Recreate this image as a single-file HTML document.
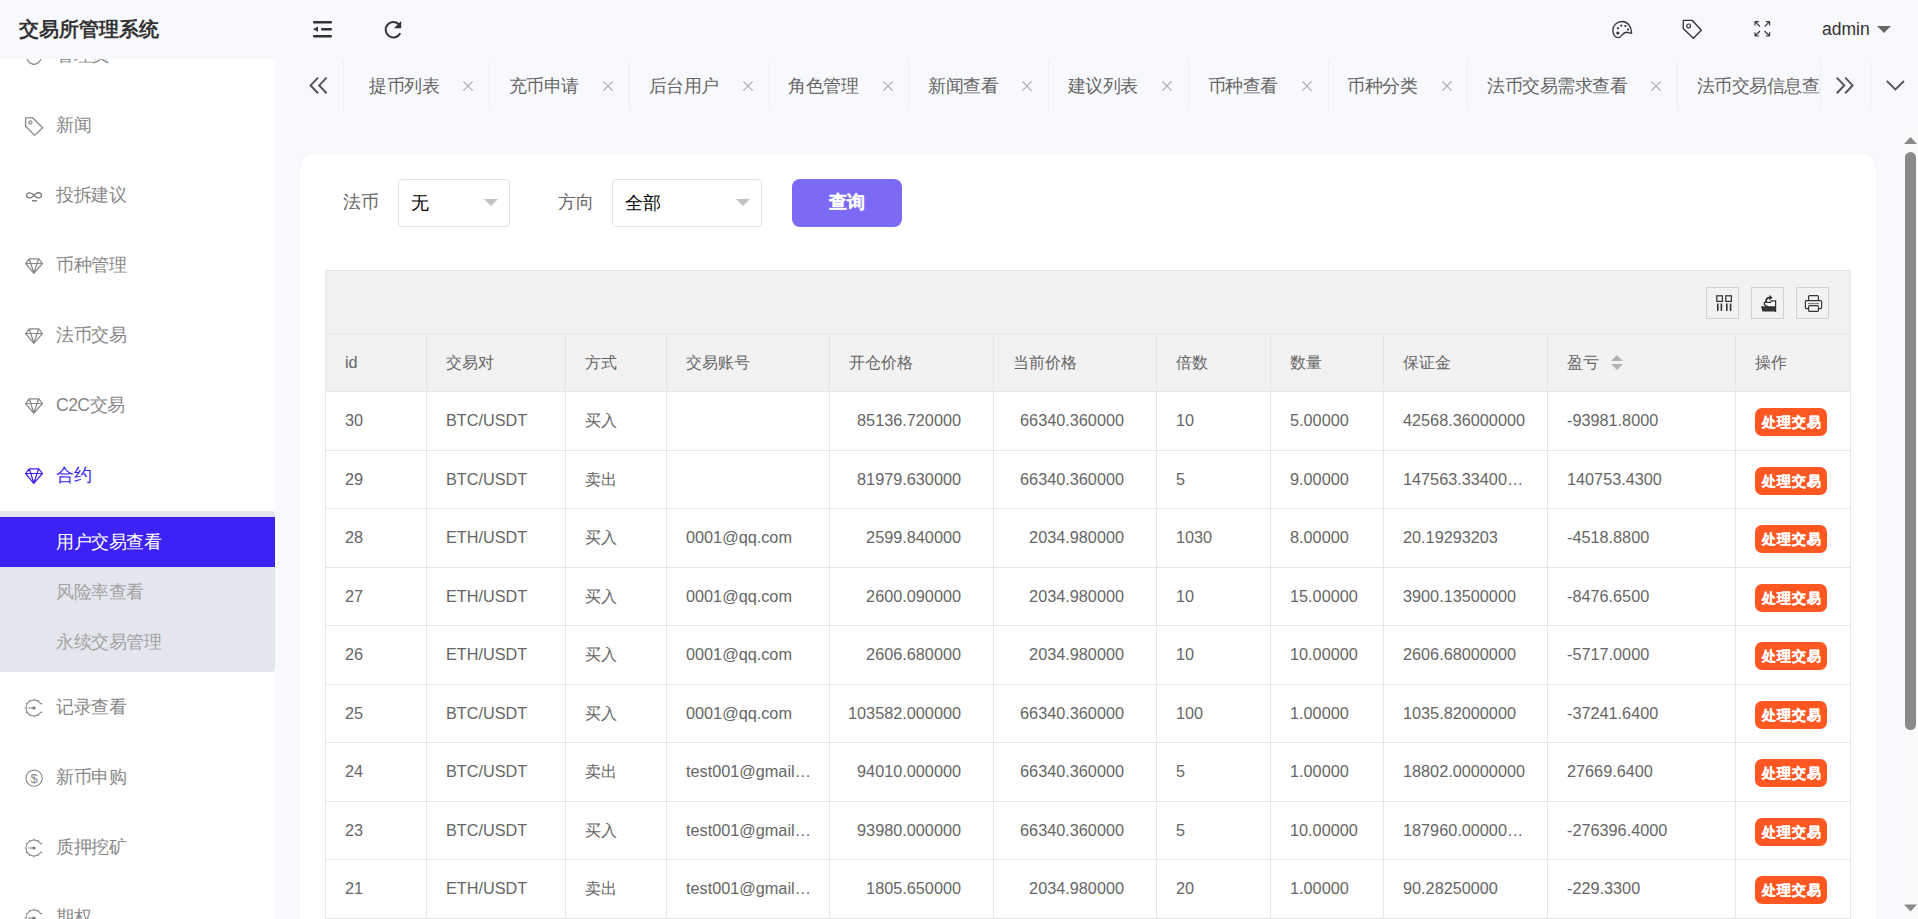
<!DOCTYPE html>
<html><head><meta charset="utf-8">
<style>
*{margin:0;padding:0;box-sizing:border-box}
html,body{width:1918px;height:919px;overflow:hidden;background:#f8f9fd;font-family:"Liberation Sans",sans-serif;color:#666}
.abs{position:absolute}
#header{position:absolute;left:0;top:0;width:1918px;height:59px;background:#f8f9fd;z-index:5}
#logo{position:absolute;left:19px;top:14px;font-size:20px;font-weight:bold;color:#333;line-height:30px;white-space:nowrap}
#side{position:absolute;left:0;top:0;width:275px;height:919px;background:#fff;overflow:hidden;z-index:1}
.mi{position:absolute;left:0;width:275px;height:70px;font-size:17.5px;letter-spacing:-0.5px;color:#888;line-height:70px;white-space:nowrap}
.mi span{position:absolute;left:56px;top:0}
.mi svg{position:absolute;left:25px;top:26px}
#sub{position:absolute;left:0;top:511px;width:275px;height:161px;background:#e4e6ee;border-radius:0 3px 3px 0}
.si{position:absolute;left:0;width:275px;height:50px;line-height:50px;font-size:17.5px;letter-spacing:-0.5px;color:#a3a3a3;white-space:nowrap}
.si span{position:absolute;left:56px}
.tabsep{position:absolute;top:61px;width:1px;height:49px;background:#eceef2}
.tab{position:absolute;top:59px;height:54px;line-height:54px;font-size:17.5px;letter-spacing:-0.5px;color:#666;white-space:nowrap}
.tx{position:absolute;top:0;font-size:18px;color:#c2c2c2}
#card{position:absolute;left:300px;top:154px;width:1576px;height:800px;background:#fff;border-radius:15px;box-shadow:0 0 1.5px rgba(0,0,20,0.07)}
.lbl{position:absolute;font-size:17.5px;letter-spacing:-0.5px;color:#666;line-height:24px;white-space:nowrap}
.sel{position:absolute;top:179px;height:48px;border:1px solid #e2e2e2;border-radius:4px;background:#fff}
.sel span{position:absolute;left:12px;top:11px;font-size:17.5px;color:#000;line-height:24px}
.caret{position:absolute;width:0;height:0;border-left:7px solid transparent;border-right:7px solid transparent;border-top:7px solid #c2c2c2}
#btn{position:absolute;left:792px;top:179px;width:110px;height:48px;background:#7a6af4;border-radius:8px;color:#fff;font-size:17.5px;font-weight:bold;-webkit-text-stroke:0.3px #fff;text-align:center;line-height:46px}
.hl{position:absolute;height:1px;background:#e6e6e6}
.vl{position:absolute;width:1px;background:#e6e6e6}
.c{position:absolute;font-size:16.25px;color:#666;white-space:nowrap;line-height:20px}
.badge{position:absolute;left:1755px;width:72px;height:28px;border-radius:7px;background:#ff5722;color:#fff;font-weight:bold;font-size:14px;letter-spacing:1px;text-indent:1px;-webkit-text-stroke:0.3px #fff;line-height:28px;text-align:center;white-space:nowrap}
.tbtn{position:absolute;top:287px;width:32px;height:32px;border:1px solid #d2d2d2;background:#f2f2f2}
</style></head><body>
<div id="side">

  <svg class="abs" style="left:22px;top:48px" width="24" height="20" viewBox="22 48 24 20"><path d="M27 58 Q27.5 63 34 64.5 Q40.5 63 41 58" fill="none" stroke="#888" stroke-width="1.3"/></svg>
  <svg class="abs" style="left:22px;top:113px" width="24" height="26" viewBox="22 113 24 26"><path d="M25.6 117.8 L32.6 117.8 L42.6 127.8 L34.6 135.4 L25.6 126.2 Z" fill="none" stroke="#888" stroke-width="1.3" stroke-linejoin="round"/><circle cx="30.4" cy="122.4" r="1.6" fill="none" stroke="#888" stroke-width="1.2"/></svg>
  <svg class="abs" style="left:22px;top:185px" width="24" height="20" viewBox="22 185 24 20"><path d="M34 195.3 C31.5 192.2 26.6 191.8 26.6 195.4 C26.6 199 31.5 198.6 34 195.3 C36.5 192 41.4 191.8 41.4 195.4 C41.4 199 36.5 198.6 34 195.3" fill="none" stroke="#777" stroke-width="1.3"/><rect x="32" y="200" width="5" height="1.6" fill="#888"/></svg>
<svg class="abs" style="left:22px;top:253px" width="24" height="24" viewBox="22 253 24 24"><path d="M29.2 258.8 L38.8 258.8 L42.4 263.5 L33.8 273.4 L25.6 263.5 Z M25.8 263.5 L42.2 263.5 M29.4 259 L33.8 273 L38.6 259" fill="none" stroke="#888" stroke-width="1.2" stroke-linejoin="round"/></svg>
<svg class="abs" style="left:22px;top:323px" width="24" height="24" viewBox="22 323 24 24"><path d="M29.2 328.8 L38.8 328.8 L42.4 333.5 L33.8 343.4 L25.6 333.5 Z M25.8 333.5 L42.2 333.5 M29.4 329 L33.8 343 L38.6 329" fill="none" stroke="#888" stroke-width="1.2" stroke-linejoin="round"/></svg>
<svg class="abs" style="left:22px;top:393px" width="24" height="24" viewBox="22 393 24 24"><path d="M29.2 398.8 L38.8 398.8 L42.4 403.5 L33.8 413.4 L25.6 403.5 Z M25.8 403.5 L42.2 403.5 M29.4 399 L33.8 413 L38.6 399" fill="none" stroke="#888" stroke-width="1.2" stroke-linejoin="round"/></svg>
<svg class="abs" style="left:22px;top:463px" width="24" height="24" viewBox="22 463 24 24"><path d="M29.2 468.8 L38.8 468.8 L42.4 473.5 L33.8 483.4 L25.6 473.5 Z M25.8 473.5 L42.2 473.5 M29.4 469 L33.8 483 L38.6 469" fill="none" stroke="#3d22f5" stroke-width="1.2" stroke-linejoin="round"/></svg>
<svg class="abs" style="left:22px;top:696px" width="24" height="24" viewBox="22 696 24 24"><path d="M40.78 703.76 A8.0 8.0 0 1 0 40.78 712.24 M40.67 704.15 L42.05 703.35 M37.85 701.33 L38.65 699.95 M34.00 700.30 L34.00 698.70 M30.15 701.33 L29.35 699.95 M27.33 704.15 L25.95 703.35 M26.30 708.00 L24.70 708.00 M27.33 711.85 L25.95 712.65 M30.15 714.67 L29.35 716.05 M34.00 715.70 L34.00 717.30 M37.85 714.67 L38.65 716.05 M40.67 711.85 L42.05 712.65" fill="none" stroke="#888" stroke-width="1.1"/><line x1="28.4" y1="708" x2="34" y2="708" stroke="#888" stroke-width="1.1"/><circle cx="34" cy="708" r="1.6" fill="#777"/></svg>
<svg class="abs" style="left:22px;top:766px" width="24" height="24" viewBox="22 766 24 24"><circle cx="34.1" cy="778.2" r="8.1" fill="none" stroke="#888" stroke-width="1.1"/><text x="34.1" y="783.4" font-size="13" text-anchor="middle" fill="#888" font-family="Liberation Sans">$</text></svg>
<svg class="abs" style="left:22px;top:836px" width="24" height="24" viewBox="22 836 24 24"><path d="M40.78 843.76 A8.0 8.0 0 1 0 40.78 852.24 M40.67 844.15 L42.05 843.35 M37.85 841.33 L38.65 839.95 M34.00 840.30 L34.00 838.70 M30.15 841.33 L29.35 839.95 M27.33 844.15 L25.95 843.35 M26.30 848.00 L24.70 848.00 M27.33 851.85 L25.95 852.65 M30.15 854.67 L29.35 856.05 M34.00 855.70 L34.00 857.30 M37.85 854.67 L38.65 856.05 M40.67 851.85 L42.05 852.65" fill="none" stroke="#888" stroke-width="1.1"/><line x1="28.4" y1="848" x2="34" y2="848" stroke="#888" stroke-width="1.1"/><circle cx="34" cy="848" r="1.6" fill="#777"/></svg>
<svg class="abs" style="left:22px;top:906px" width="24" height="24" viewBox="22 906 24 24"><path d="M40.78 913.76 A8.0 8.0 0 1 0 40.78 922.24 M40.67 914.15 L42.05 913.35 M37.85 911.33 L38.65 909.95 M34.00 910.30 L34.00 908.70 M30.15 911.33 L29.35 909.95 M27.33 914.15 L25.95 913.35 M26.30 918.00 L24.70 918.00 M27.33 921.85 L25.95 922.65 M30.15 924.67 L29.35 926.05 M34.00 925.70 L34.00 927.30 M37.85 924.67 L38.65 926.05 M40.67 921.85 L42.05 922.65" fill="none" stroke="#888" stroke-width="1.1"/><line x1="28.4" y1="918" x2="34" y2="918" stroke="#888" stroke-width="1.1"/><circle cx="34" cy="918" r="1.6" fill="#777"/></svg>
  <div class="mi" style="top:20px"><span>管理员</span></div>
  <div class="mi" style="top:90px"><span>新闻</span></div>
  <div class="mi" style="top:160px"><span>投拆建议</span></div>
  <div class="mi" style="top:230px"><span>币种管理</span></div>
  <div class="mi" style="top:300px"><span>法币交易</span></div>
  <div class="mi" style="top:370px"><span>C2C交易</span></div>
  <div class="mi" style="top:440px;color:#3d22f5"><span>合约</span></div>
  <div id="sub">
    <div class="si" style="top:6px;background:#3d22f5;color:#fff"><span>用户交易查看</span></div>
    <div class="si" style="top:56px"><span>风险率查看</span></div>
    <div class="si" style="top:106px"><span>永续交易管理</span></div>
  </div>
  <div class="mi" style="top:672px"><span>记录查看</span></div>
  <div class="mi" style="top:742px"><span>新币申购</span></div>
  <div class="mi" style="top:812px"><span>质押挖矿</span></div>
  <div class="mi" style="top:882px"><span>期权</span></div>
</div>
<div id="header">
  <div id="logo">交易所管理系统</div>
  <div class="abs" style="left:1822px;top:16px;font-size:17.5px;color:#333;line-height:26px">admin</div>
  <div class="caret" style="left:1877px;top:26px;border-left-width:7px;border-right-width:7px;border-top:7px solid #666"></div>
</div>

<!-- header icons -->
<svg class="abs" style="left:310px;top:18px;z-index:6" width="26" height="24" viewBox="310 18 26 24">
  <rect x="313" y="21" width="19" height="2.4" rx="1" fill="#333"/>
  <rect x="321" y="28" width="11" height="2.4" rx="1" fill="#333"/>
  <rect x="313" y="35" width="19" height="2.4" rx="1" fill="#333"/>
  <path d="M313 29.2 L318 26.6 L318 31.8 Z" fill="#333"/>
</svg>
<svg class="abs" style="left:380px;top:17px;z-index:6" width="26" height="26" viewBox="380 17 26 26">
  <path d="M399.3 24.8 A7.7 7.7 0 1 0 400.2 33.2" fill="none" stroke="#333" stroke-width="2.05"/>
  <path d="M401.2 21 L401.2 28.2 L394 28.2 Z" fill="#333"/>
</svg>
<svg class="abs" style="left:1608px;top:16px;z-index:6" width="30" height="26" viewBox="1608 16 30 26">
  <path d="M1631.6 33.3 C1631.6 26.6 1627.6 21.5 1622.2 21.5 C1616.6 21.5 1612.9 25.6 1612.9 30.2 C1612.9 34.8 1615.2 37.6 1618.4 37.6 C1621.6 37.6 1622.4 32.3 1626.4 32.3 C1628.6 32.3 1630 33.3 1631.6 33.3 Z" fill="none" stroke="#333" stroke-width="1.4" stroke-linejoin="round"/>
  <circle cx="1617.8" cy="33" r="1.6" fill="#333"/>
  <circle cx="1618" cy="28.2" r="1.1" fill="#333"/>
  <circle cx="1621.3" cy="25.7" r="1.1" fill="#333"/>
  <circle cx="1625.4" cy="26.1" r="1.1" fill="#333"/>
  <circle cx="1628" cy="29.5" r="1.1" fill="#333"/>
</svg>
<svg class="abs" style="left:1678px;top:16px;z-index:6" width="30" height="26" viewBox="1678 16 30 26">
  <path d="M1683.3 20.3 L1692.2 20.3 L1701.3 30.2 L1693.4 38.2 L1683.2 28.6 Z" fill="none" stroke="#333" stroke-width="1.35" stroke-linejoin="round"/>
  <circle cx="1688.6" cy="25.9" r="1.9" fill="none" stroke="#333" stroke-width="1.2"/>
</svg>
<svg class="abs" style="left:1750px;top:16px;z-index:6" width="26" height="26" viewBox="1750 16 26 26">
  <g stroke="#333" stroke-width="1.15" fill="none">
    <path d="M1755 21.6 L1760 26.6 M1755 21.6 L1755 25.4 M1755 21.6 L1758.8 21.6"/>
    <path d="M1769.6 21.6 L1764.6 26.6 M1769.6 21.6 L1769.6 25.4 M1769.6 21.6 L1765.8 21.6"/>
    <path d="M1755 36 L1760 31 M1755 36 L1755 32.2 M1755 36 L1758.8 36"/>
    <path d="M1769.6 36 L1764.6 31 M1769.6 36 L1769.6 32.2 M1769.6 36 L1765.8 36"/>
  </g>
</svg>
<!-- tab arrows -->
<svg class="abs" style="left:305px;top:72px" width="26" height="26" viewBox="305 72 26 26">
  <path d="M318 77.6 L310.6 85.4 L318 93.2 M326.6 77.6 L319.2 85.4 L326.6 93.2" fill="none" stroke="#555" stroke-width="2"/>
</svg>
<svg class="abs" style="left:1832px;top:72px" width="26" height="26" viewBox="1832 72 26 26">
  <path d="M1836.8 77.6 L1844.2 85.4 L1836.8 93.2 M1845.2 77.6 L1852.6 85.4 L1845.2 93.2" fill="none" stroke="#555" stroke-width="2"/>
</svg>
<svg class="abs" style="left:1882px;top:76px" width="26" height="18" viewBox="1882 76 26 18">
  <path d="M1886.8 81 L1895.4 89.4 L1904 81" fill="none" stroke="#555" stroke-width="1.8"/>
</svg>
<div class="tabsep" style="left:1820px"></div>
<div class="tabsep" style="left:1870px"></div>
<!-- scrollbar -->
<div class="abs" style="left:1901px;top:129px;width:17px;height:790px;background:#fafafa"></div>
<svg class="abs" style="left:1901px;top:129px" width="17" height="790" viewBox="0 0 17 790">
  <path d="M3 15 L9.5 8 L16 15 Z" fill="#8a8a8a"/>
  <rect x="4" y="23" width="11" height="578" rx="5.5" fill="#8a8a8a"/>
  <path d="M3 775.5 L9.5 782.5 L16 775.5 Z" fill="#8a8a8a"/>
</svg>

<!-- tabs -->
<div class="tabsep" style="left:343px"></div>
<div class="tab" style="left:369.00px">提币列表</div>
<svg class="abs" style="left:463px;top:81px" width="10" height="10"><path d="M0.3 0.3 L9.7 9.7 M9.7 0.3 L0.3 9.7" stroke="#aaa" stroke-width="1.1"/></svg>
<div class="tabsep" style="left:489px"></div>
<div class="tab" style="left:508.75px">充币申请</div>
<svg class="abs" style="left:603px;top:81px" width="10" height="10"><path d="M0.3 0.3 L9.7 9.7 M9.7 0.3 L0.3 9.7" stroke="#aaa" stroke-width="1.1"/></svg>
<div class="tabsep" style="left:629px"></div>
<div class="tab" style="left:648.50px">后台用户</div>
<svg class="abs" style="left:743px;top:81px" width="10" height="10"><path d="M0.3 0.3 L9.7 9.7 M9.7 0.3 L0.3 9.7" stroke="#aaa" stroke-width="1.1"/></svg>
<div class="tabsep" style="left:769px"></div>
<div class="tab" style="left:788.25px">角色管理</div>
<svg class="abs" style="left:883px;top:81px" width="10" height="10"><path d="M0.3 0.3 L9.7 9.7 M9.7 0.3 L0.3 9.7" stroke="#aaa" stroke-width="1.1"/></svg>
<div class="tabsep" style="left:908px"></div>
<div class="tab" style="left:928.00px">新闻查看</div>
<svg class="abs" style="left:1022px;top:81px" width="10" height="10"><path d="M0.3 0.3 L9.7 9.7 M9.7 0.3 L0.3 9.7" stroke="#aaa" stroke-width="1.1"/></svg>
<div class="tabsep" style="left:1048px"></div>
<div class="tab" style="left:1067.75px">建议列表</div>
<svg class="abs" style="left:1162px;top:81px" width="10" height="10"><path d="M0.3 0.3 L9.7 9.7 M9.7 0.3 L0.3 9.7" stroke="#aaa" stroke-width="1.1"/></svg>
<div class="tabsep" style="left:1188px"></div>
<div class="tab" style="left:1207.50px">币种查看</div>
<svg class="abs" style="left:1302px;top:81px" width="10" height="10"><path d="M0.3 0.3 L9.7 9.7 M9.7 0.3 L0.3 9.7" stroke="#aaa" stroke-width="1.1"/></svg>
<div class="tabsep" style="left:1328px"></div>
<div class="tab" style="left:1347.25px">币种分类</div>
<svg class="abs" style="left:1442px;top:81px" width="10" height="10"><path d="M0.3 0.3 L9.7 9.7 M9.7 0.3 L0.3 9.7" stroke="#aaa" stroke-width="1.1"/></svg>
<div class="tabsep" style="left:1467px"></div>
<div class="tab" style="left:1487.00px">法币交易需求查看</div>
<svg class="abs" style="left:1651px;top:81px" width="10" height="10"><path d="M0.3 0.3 L9.7 9.7 M9.7 0.3 L0.3 9.7" stroke="#aaa" stroke-width="1.1"/></svg>
<div class="tabsep" style="left:1677px"></div>
<div class="tab" style="left:1696.75px;width:123.25px;overflow:hidden">法币交易信息查看</div>
<div id="card"></div>
<div class="lbl" style="left:343px;top:190px">法币</div>
<div class="sel" style="left:398px;width:112px"><span>无</span><div class="caret" style="left:85px;top:19px"></div></div>
<div class="lbl" style="left:558px;top:190px">方向</div>
<div class="sel" style="left:612px;width:150px"><span>全部</span><div class="caret" style="left:123px;top:19px"></div></div>
<div id="btn">查询</div>
<div class="abs" style="left:325px;top:270px;width:1526px;height:122px;background:#f2f2f2"></div>
<div class="hl" style="left:325px;top:270px;width:1526px"></div>
<div class="hl" style="left:325px;top:333px;width:1526px"></div>
<div class="hl" style="left:325px;top:391px;width:1526px"></div>
<div class="hl" style="left:325px;top:450px;width:1526px"></div>
<div class="hl" style="left:325px;top:508px;width:1526px"></div>
<div class="hl" style="left:325px;top:567px;width:1526px"></div>
<div class="hl" style="left:325px;top:625px;width:1526px"></div>
<div class="hl" style="left:325px;top:684px;width:1526px"></div>
<div class="hl" style="left:325px;top:742px;width:1526px"></div>
<div class="hl" style="left:325px;top:801px;width:1526px"></div>
<div class="hl" style="left:325px;top:859px;width:1526px"></div>
<div class="hl" style="left:325px;top:918px;width:1526px"></div>
<div class="vl" style="left:325px;top:270px;height:649px"></div>
<div class="vl" style="left:1850px;top:270px;height:649px"></div>
<div class="vl" style="left:426px;top:333px;height:586px"></div>
<div class="vl" style="left:565px;top:333px;height:586px"></div>
<div class="vl" style="left:666px;top:333px;height:586px"></div>
<div class="vl" style="left:829px;top:333px;height:586px"></div>
<div class="vl" style="left:993px;top:333px;height:586px"></div>
<div class="vl" style="left:1156px;top:333px;height:586px"></div>
<div class="vl" style="left:1270px;top:333px;height:586px"></div>
<div class="vl" style="left:1383px;top:333px;height:586px"></div>
<div class="vl" style="left:1547px;top:333px;height:586px"></div>
<div class="vl" style="left:1735px;top:333px;height:586px"></div>
<div class="c" style="left:345px;top:352px">id</div>
<div class="c" style="left:446px;top:352px">交易对</div>
<div class="c" style="left:585px;top:352px">方式</div>
<div class="c" style="left:686px;top:352px">交易账号</div>
<div class="c" style="left:849px;top:352px">开仓价格</div>
<div class="c" style="left:1013px;top:352px">当前价格</div>
<div class="c" style="left:1176px;top:352px">倍数</div>
<div class="c" style="left:1290px;top:352px">数量</div>
<div class="c" style="left:1403px;top:352px">保证金</div>
<div class="c" style="left:1567px;top:352px">盈亏</div>
<div class="c" style="left:1755px;top:352px">操作</div>
<div class="c" style="left:345px;top:410px">30</div>
<div class="c" style="left:446px;top:410px">BTC/USDT</div>
<div class="c" style="left:585px;top:410px">买入</div>
<div class="c" style="right:957px;top:410px">85136.720000</div>
<div class="c" style="right:794px;top:410px">66340.360000</div>
<div class="c" style="left:1176px;top:410px">10</div>
<div class="c" style="left:1290px;top:410px">5.00000</div>
<div class="c" style="left:1403px;top:410px">42568.36000000</div>
<div class="c" style="left:1567px;top:410px">-93981.8000</div>
<div class="badge" style="top:408px">处理交易</div>
<div class="c" style="left:345px;top:469px">29</div>
<div class="c" style="left:446px;top:469px">BTC/USDT</div>
<div class="c" style="left:585px;top:469px">卖出</div>
<div class="c" style="right:957px;top:469px">81979.630000</div>
<div class="c" style="right:794px;top:469px">66340.360000</div>
<div class="c" style="left:1176px;top:469px">5</div>
<div class="c" style="left:1290px;top:469px">9.00000</div>
<div class="c" style="left:1403px;top:469px">147563.33400…</div>
<div class="c" style="left:1567px;top:469px">140753.4300</div>
<div class="badge" style="top:467px">处理交易</div>
<div class="c" style="left:345px;top:527px">28</div>
<div class="c" style="left:446px;top:527px">ETH/USDT</div>
<div class="c" style="left:585px;top:527px">买入</div>
<div class="c" style="left:686px;top:527px">0001@qq.com</div>
<div class="c" style="right:957px;top:527px">2599.840000</div>
<div class="c" style="right:794px;top:527px">2034.980000</div>
<div class="c" style="left:1176px;top:527px">1030</div>
<div class="c" style="left:1290px;top:527px">8.00000</div>
<div class="c" style="left:1403px;top:527px">20.19293203</div>
<div class="c" style="left:1567px;top:527px">-4518.8800</div>
<div class="badge" style="top:525px">处理交易</div>
<div class="c" style="left:345px;top:586px">27</div>
<div class="c" style="left:446px;top:586px">ETH/USDT</div>
<div class="c" style="left:585px;top:586px">买入</div>
<div class="c" style="left:686px;top:586px">0001@qq.com</div>
<div class="c" style="right:957px;top:586px">2600.090000</div>
<div class="c" style="right:794px;top:586px">2034.980000</div>
<div class="c" style="left:1176px;top:586px">10</div>
<div class="c" style="left:1290px;top:586px">15.00000</div>
<div class="c" style="left:1403px;top:586px">3900.13500000</div>
<div class="c" style="left:1567px;top:586px">-8476.6500</div>
<div class="badge" style="top:584px">处理交易</div>
<div class="c" style="left:345px;top:644px">26</div>
<div class="c" style="left:446px;top:644px">ETH/USDT</div>
<div class="c" style="left:585px;top:644px">买入</div>
<div class="c" style="left:686px;top:644px">0001@qq.com</div>
<div class="c" style="right:957px;top:644px">2606.680000</div>
<div class="c" style="right:794px;top:644px">2034.980000</div>
<div class="c" style="left:1176px;top:644px">10</div>
<div class="c" style="left:1290px;top:644px">10.00000</div>
<div class="c" style="left:1403px;top:644px">2606.68000000</div>
<div class="c" style="left:1567px;top:644px">-5717.0000</div>
<div class="badge" style="top:642px">处理交易</div>
<div class="c" style="left:345px;top:703px">25</div>
<div class="c" style="left:446px;top:703px">BTC/USDT</div>
<div class="c" style="left:585px;top:703px">买入</div>
<div class="c" style="left:686px;top:703px">0001@qq.com</div>
<div class="c" style="right:957px;top:703px">103582.000000</div>
<div class="c" style="right:794px;top:703px">66340.360000</div>
<div class="c" style="left:1176px;top:703px">100</div>
<div class="c" style="left:1290px;top:703px">1.00000</div>
<div class="c" style="left:1403px;top:703px">1035.82000000</div>
<div class="c" style="left:1567px;top:703px">-37241.6400</div>
<div class="badge" style="top:701px">处理交易</div>
<div class="c" style="left:345px;top:761px">24</div>
<div class="c" style="left:446px;top:761px">BTC/USDT</div>
<div class="c" style="left:585px;top:761px">卖出</div>
<div class="c" style="left:686px;top:761px">test001@gmail…</div>
<div class="c" style="right:957px;top:761px">94010.000000</div>
<div class="c" style="right:794px;top:761px">66340.360000</div>
<div class="c" style="left:1176px;top:761px">5</div>
<div class="c" style="left:1290px;top:761px">1.00000</div>
<div class="c" style="left:1403px;top:761px">18802.00000000</div>
<div class="c" style="left:1567px;top:761px">27669.6400</div>
<div class="badge" style="top:759px">处理交易</div>
<div class="c" style="left:345px;top:820px">23</div>
<div class="c" style="left:446px;top:820px">BTC/USDT</div>
<div class="c" style="left:585px;top:820px">买入</div>
<div class="c" style="left:686px;top:820px">test001@gmail…</div>
<div class="c" style="right:957px;top:820px">93980.000000</div>
<div class="c" style="right:794px;top:820px">66340.360000</div>
<div class="c" style="left:1176px;top:820px">5</div>
<div class="c" style="left:1290px;top:820px">10.00000</div>
<div class="c" style="left:1403px;top:820px">187960.00000…</div>
<div class="c" style="left:1567px;top:820px">-276396.4000</div>
<div class="badge" style="top:818px">处理交易</div>
<div class="c" style="left:345px;top:878px">21</div>
<div class="c" style="left:446px;top:878px">ETH/USDT</div>
<div class="c" style="left:585px;top:878px">卖出</div>
<div class="c" style="left:686px;top:878px">test001@gmail…</div>
<div class="c" style="right:957px;top:878px">1805.650000</div>
<div class="c" style="right:794px;top:878px">2034.980000</div>
<div class="c" style="left:1176px;top:878px">20</div>
<div class="c" style="left:1290px;top:878px">1.00000</div>
<div class="c" style="left:1403px;top:878px">90.28250000</div>
<div class="c" style="left:1567px;top:878px">-229.3300</div>
<div class="badge" style="top:876px">处理交易</div>

<div class="tbtn" style="left:1706px;width:33px"></div>
<div class="tbtn" style="left:1751px;width:33px"></div>
<div class="tbtn" style="left:1796px;width:33px"></div>
<svg class="abs" style="left:1706px;top:287px" width="33" height="32" viewBox="1706 287 33 32">
  <rect x="1716.8" y="295.8" width="5.6" height="5.6" fill="none" stroke="#333" stroke-width="1.25"/>
  <rect x="1725.8" y="295.8" width="5.6" height="5.6" fill="none" stroke="#333" stroke-width="1.25"/>
  <g fill="#333"><rect x="1717" y="303.5" width="1.6" height="7.4"/><rect x="1720.6" y="303.5" width="1.6" height="7.4"/><rect x="1726" y="303.5" width="1.6" height="7.4"/><rect x="1729.8" y="303.5" width="1.6" height="7.4"/></g>
</svg>
<svg class="abs" style="left:1751px;top:287px" width="33" height="32" viewBox="1751 287 33 32">
  <path d="M1764.4 304.6 L1764.4 302.4 L1770.6 302.4 L1771.6 300.8 L1775.6 300.8 L1775.6 311.2 Z" fill="#fff" stroke="#333" stroke-width="1.2"/>
  <path d="M1761 306.2 L1775.8 306.2 L1775.8 311.6 L1762.4 311.6 Z" fill="#333"/>
  <path d="M1766.2 302.6 C1765.6 298.8 1767.4 297.4 1770.2 297.6" fill="none" stroke="#333" stroke-width="1.8"/>
  <path d="M1769.4 294.8 L1772.6 297.8 L1769.4 300.6 Z" fill="#333"/>
</svg>
<svg class="abs" style="left:1796px;top:287px" width="33" height="32" viewBox="1796 287 33 32">
  <path d="M1808.6 300.6 L1808.6 296.6 Q1808.6 295.6 1809.6 295.6 L1817.4 295.6 Q1818.4 295.6 1818.4 296.6 L1818.4 300.6" fill="none" stroke="#333" stroke-width="1.15"/>
  <path d="M1808.6 308.6 L1806.4 308.6 Q1805.4 308.6 1805.4 307.6 L1805.4 301.6 Q1805.4 300.6 1806.4 300.6 L1820.6 300.6 Q1821.6 300.6 1821.6 301.6 L1821.6 307.6 Q1821.6 308.6 1820.6 308.6 L1818.4 308.6" fill="none" stroke="#333" stroke-width="1.15"/>
  <rect x="1808.6" y="305.6" width="9.8" height="5.8" rx="1" fill="none" stroke="#333" stroke-width="1.15"/>
  <line x1="1808" y1="303.6" x2="1819" y2="303.6" stroke="#555" stroke-width="0.8"/>
</svg>
<svg class="abs" style="left:1608px;top:350px" width="20" height="24" viewBox="1608 350 20 24">
  <path d="M1611 361 L1617 355 L1623 361 Z M1611 364 L1617 370 L1623 364 Z" fill="#b2b2b2"/>
</svg>

</body></html>
